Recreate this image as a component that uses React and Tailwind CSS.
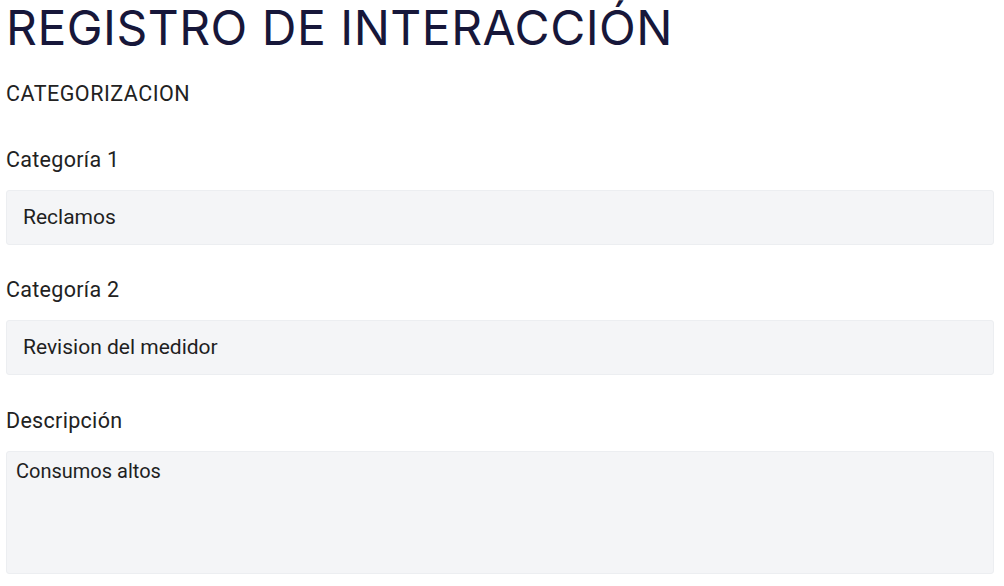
/**
 * Registro de interacción — formulario de categorización.
 */

const Field = ({ label, value }) => (
  <div className="mt-[33px] first:mt-0">
    <label className="block text-[21.5px] leading-6 text-[#222] tracking-[0.3px]">{label}</label>
    <div className="mt-[18px] h-[55px] flex items-center px-4 rounded-[3px] bg-[#f4f5f7] border border-[#eceef1] text-[21px] text-[#1f1f1f]">
      {value}
    </div>
  </div>
);

const App = () => {
  return (
    <div className="min-h-screen bg-white pl-[6px] pr-[10px] font-['Roboto',sans-serif] overflow-hidden">
      <h1 className="font-['Inter',sans-serif] text-[48px] leading-[55px] font-normal text-[#17173a] tracking-[0.5px]">
        REGISTRO DE INTERACCIÓN
      </h1>

      <p className="mt-[27px] text-[21.5px] leading-6 text-[#222] tracking-[0.5px]">CATEGORIZACION</p>

      <div className="mt-[42px]">
        <Field label="Categoría 1" value="Reclamos" />
        <Field label="Categoría 2" value="Revision del medidor" />

        <div className="mt-[34px]">
          <label className="block text-[21.5px] leading-6 text-[#222] tracking-[0.3px]">Descripción</label>
          <textarea
            readOnly
            value="Consumos altos"
            className="mt-[18px] block w-full h-[123px] resize-none px-[9px] py-[4px] rounded-[3px] bg-[#f4f5f7] border border-[#eceef1] text-[20px] text-[#1f1f1f] outline-none"
          />
        </div>
      </div>
    </div>
  );
};

export default App;
